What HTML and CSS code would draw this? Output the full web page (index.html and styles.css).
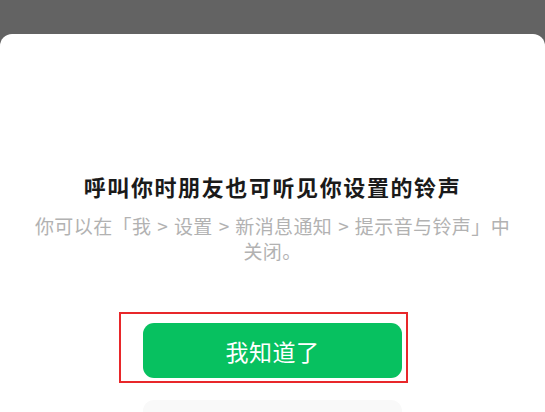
FILE: index.html
```html
<!DOCTYPE html>
<html lang="zh-CN">
<head>
<meta charset="utf-8">
<title>铃声提示</title>
<link rel="stylesheet" href="styles.css">
</head>
<body>
<div class="sheet">
  <h1 class="title">呼叫你时朋友也可听见你设置的铃声</h1>
  <p class="desc">你可以在「我<span class="sep">&gt;</span>设置<span class="sep">&gt;</span>新消息通知<span class="sep">&gt;</span>提示音与铃声」中<br>关闭。</p>
  <div class="actions">
    <button class="btn btn-primary">我知道了</button>
    <div class="btn btn-ghost"></div>
  </div>
  <div class="highlight"></div>
</div>
</body>
</html>
```
FILE: styles.css
```css
html, body {
  margin: 0;
  padding: 0;
  height: 100%;
  overflow: hidden;
}
body {
  background: #636363;
  font-family: "Noto Sans CJK SC", "Noto Sans", sans-serif;
  padding-top: 34px;
  box-sizing: border-box;
}
.sheet {
  position: relative;
  background: #ffffff;
  border-radius: 12px 12px 0 0;
  height: 100%;
  padding-top: 137px;
  box-sizing: border-box;
  display: flex;
  flex-direction: column;
  align-items: center;
  overflow: hidden;
}
.title {
  margin: 0;
  font-size: 22px;
  letter-spacing: 1.6px;
  line-height: 30px;
  font-weight: 700;
  color: #1a1a1a;
  text-align: center;
}
.desc {
  margin: 12px 0 0;
  padding: 0 32px;
  font-size: 19px;
  letter-spacing: 0.4px;
  line-height: 25px;
  color: #b2b2b2;
  text-align: center;
}
.sep {
  margin: 0 6px;
  letter-spacing: 0;
}
.actions {
  margin-top: 60px;
  display: flex;
  flex-direction: column;
  gap: 22px;
}
.btn {
  box-sizing: border-box;
  width: 259px;
  height: 55px;
  border: none;
  border-radius: 11px;
  font-family: inherit;
  font-size: 23px;
  letter-spacing: 0.5px;
  padding: 0;
}
.btn-primary {
  background: #07c160;
  color: #ffffff;
}
.btn-ghost {
  height: 12px;
  border-radius: 11px 11px 0 0;
  background: #f9f9f9;
}
.highlight {
  position: absolute;
  left: 119px;
  top: 278px;
  width: 285px;
  height: 67px;
  border: 2px solid #e8272a;
}
```
